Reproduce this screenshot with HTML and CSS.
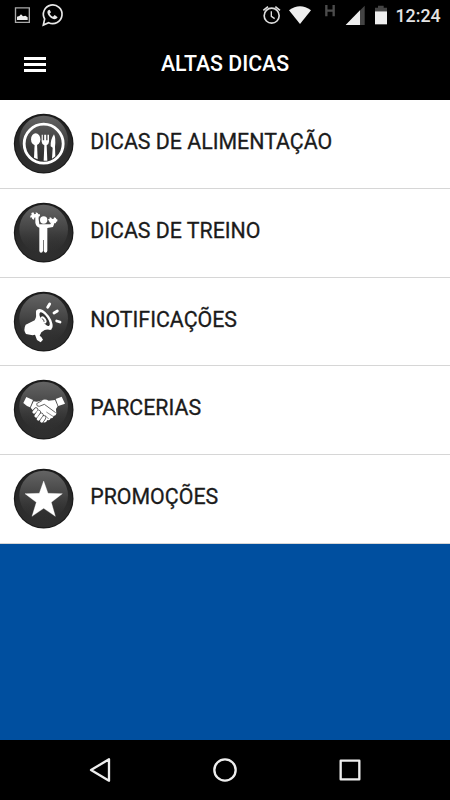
FILE: index.html
```html
<!DOCTYPE html>
<html lang="pt-BR">
<head>
<meta charset="utf-8">
<title>Altas Dicas</title>
<link rel="stylesheet" href="styles.css">
</head>
<body>
<svg class="defs" width="0" height="0" aria-hidden="true">
  <defs>
    <radialGradient id="disc" cx=".5" cy=".75" r=".75">
      <stop offset="0" stop-color="#303030"/><stop offset=".6" stop-color="#2c2c2c"/><stop offset="1" stop-color="#202020"/>
    </radialGradient>
    <linearGradient id="gloss" x1="0" y1="0" x2="0" y2="1">
      <stop offset="0" stop-color="#646464"/><stop offset=".5" stop-color="#444"/><stop offset="1" stop-color="#303030" stop-opacity="0"/>
    </linearGradient>
    <g id="badge">
      <circle cx="119" cy="119" r="89.5" fill="#191919"/>
      <circle cx="119" cy="119" r="86" fill="url(#disc)"/>
      <ellipse cx="119" cy="109" rx="73" ry="74" fill="url(#gloss)"/>
    </g>
  </defs>
</svg>
<div class="screen">
  <header class="status">
    <svg width="70" height="32" viewBox="0 0 210 96">
      <path d="M46.500 23.500H88V67H46.500Z" fill="none" stroke="#aaa" stroke-width="4"/>
      <path d="M51 60V50L58 48L63 43L69 49L76 47L83 52V60Z" fill="#eee"/>
      <path d="M130 75L134 57A28 28 0 1 1 146 68Z" fill="none" stroke="#e8e8e8" stroke-width="5"/>
      <path d="M145 31C140 35 142 43 150 51C158 59 168 60 173 52L164 45L159 50C154 48 151 44 149 41L153 37L149 29Z" fill="#e8e8e8"/>
    </svg>
    <div class="status-right">
      <svg width="140" height="32" viewBox="0 0 420 96">
        <g fill="none" stroke="#ddd" stroke-width="5"><circle cx="65" cy="47" r="22.5"/><path d="M40 31L54 20M76 20L90 31"/><path d="M64 34V49L74 56" stroke-width="4"/></g>
        <path d="M117 31Q150 6 183 31L150 72Z" fill="#eee"/>
        <path d="M229 15V49M251 15V49M228 32H251" stroke="#4c4c4c" stroke-width="7"/>
        <path d="M344 17V75H287Z" fill="#444"/><path d="M330 31V75H287Z" fill="#eee"/>
        <path d="M375 23H384V17H401V23H411V34H375Z" fill="#444"/><path d="M375 34H411V73H375Z" fill="#eee"/>
      </svg>
      <span class="clock">12:24</span>
    </div>
  </header>
  <div class="appbar">
    <div class="menu"><i></i><i></i><i></i></div>
    <h1>ALTAS DICAS</h1>
  </div>
  <main class="list">
    <div class="row">
      <svg viewBox="0 0 240 240"><use href="#badge"/>
        <circle cx="119" cy="119" r="58.5" fill="none" stroke="#fff" stroke-width="8.500"/>
        <g fill="#fff"><ellipse cx="95" cy="106" rx="14" ry="18"/><path d="M92 118H99L101 166L90 161Z"/>
        <path d="M113 92H116.500V109H120.500V92H126.500V109H130.500V92H135V113Q134 122 128 124L130 170H119L121 124Q114 122 113 113Z"/>
        <path d="M150 91Q156 103 153 128L154 157L144 164L146 131L140 127Q139 107 150 91Z"/></g>
      </svg><span>DICAS DE ALIMENTAÇÃO</span>
    </div>
    <div class="row">
      <svg viewBox="0 0 240 240"><use href="#badge"/>
        <g fill="#fff"><circle cx="119" cy="81" r="11"/>
        <path d="M94 72V89Q96 101 106 104V174Q107 179 111 179Q116 179 117 174V141H119V174Q121 179 125 179Q130 178 130 173V105L147 102L154 83H144L139 94H106L103 72Z"/>
        <path d="M79 68L83 66L82 60L88 58L91 64L96 62L95 58L101 60L103 64L107 63L108 69L104 71L103 76L98 77L95 73L91 74L90 80L85 78L83 73L79 74Z"/>
        <path d="M132 79L137 77V73L142 74L144 78L149 77L150 73L156 75L157 79L160 79V85L157 86L155 91L150 90L148 86L144 87L141 91L137 88L135 84Z"/></g>
      </svg><span>DICAS DE TREINO</span>
    </div>
    <div class="row">
      <svg viewBox="0 0 240 240"><use href="#badge"/>
        <path d="M96 84Q99 105 92 115L65 128Q57 143 66 156L86 160L93 158L99 174L110 181L117 173L112 165L107 161L112 151Q124 139 143 143Z" fill="#fff"/>
        <g transform="rotate(-35 121 112)"><ellipse cx="121" cy="112" rx="17" ry="36" fill="#fff"/><ellipse cx="122" cy="112" rx="9" ry="24" fill="#333"/><ellipse cx="118" cy="112" rx="7" ry="12" fill="#fff"/><path d="M116 106Q121 112 116 118" fill="none" stroke="#444" stroke-width="2.500"/></g>
        <g stroke="#fff" stroke-width="8.500" stroke-linecap="round"><path d="M131 76L137 66M150 93L160 87M158 117L168 120"/></g>
      </svg><span>NOTIFICAÇÕES</span>
    </div>
    <div class="row">
      <svg viewBox="0 0 240 240"><use href="#badge"/>
        <g fill="#fff"><path d="M58 99L67 81L87 90L78 112Q67 108 58 99Z"/><path d="M155 87L173 80L183 101L163 108Z"/>
        <path d="M89 94Q101 98 113 91Q124 86 134 92L153 90L161 109L156 117L157 131Q155 138 149 137Q147 146 140 145Q137 153 130 150Q126 160 118 157L106 150L94 130L80 113Z"/></g>
        <path d="M115 91L98 101Q97 110 106 109L121 103L155 128" fill="none" stroke="#444" stroke-width="2.500" stroke-linejoin="round"/>
        <path d="M127 126L147 139M123 136L134 147" fill="none" stroke="#555" stroke-width="2"/>
        <g stroke-linecap="round"><path d="M96 119L90 126M104 126L96 138M112 135L103 147M120 143L113 153" stroke="#3a3a3a" stroke-width="13.500"/><path d="M96 119L90 126M104 126L96 138M112 135L103 147M120 143L113 153" stroke="#fff" stroke-width="9.500"/></g>
      </svg><span>PARCERIAS</span>
    </div>
    <div class="row">
      <svg viewBox="0 0 240 240"><use href="#badge"/>
        <path d="M119 66L132 103L175 104L142 130L154 172L119 148L84 172L97 130L63 104L106 103Z" fill="#fff" stroke="#fff"/>
      </svg><span>PROMOÇÕES</span>
    </div>
  </main>
  <nav class="navbar">
    <svg width="300" height="60" viewBox="0 0 900 180" fill="none" stroke="#eee" stroke-width="7" stroke-linejoin="round">
      <path d="M87 58V122L33 90Z"/><circle cx="435" cy="90" r="32"/><path d="M782 62H838V118H782Z"/>
    </svg>
  </nav>
</div>
</body>
</html>
```
FILE: styles.css
```css
* { box-sizing: border-box; }
body { margin: 0; font-family: Roboto, sans-serif; }
.defs { display: block; height: 0; }
.screen { width: 450px; height: 800px; display: flex; flex-direction: column; background: #004f9f; overflow: hidden; }
.status { height: 32px; background: #000; display: flex; justify-content: space-between; }
.status svg { display: block; }
.status-right { display: flex; width: 200px; }
.clock { margin-left: 5.5px; color: #e4e4e4; font-size: 17.8px; font-weight: 500; line-height: 32px; }
.appbar { height: 68px; background: #000; display: grid; grid-template-columns: 70px 310px 70px; align-items: start; }
.menu { display: flex; flex-direction: column; gap: 3px; margin: 25px 0 0 24px; width: 22px; }
.menu i { height: 3px; background: #fff; }
h1 { margin: 0; color: #fff; text-align: center; font-size: 21.3px; font-weight: 500; line-height: 64px; }
.list { background: #fff; }
.row { height: 88.8px; display: flex; align-items: flex-start; padding: 4px 0 0 4px; border-bottom: 1.5px solid #d6d6d6; }
.row svg { width: 80px; height: 80px; flex: none; }
.row span { margin-left: 6.2px; color: #1b1b1b; font-size: 21.35px; line-height: 75px; white-space: nowrap; -webkit-text-stroke: .3px #1b1b1b; }
.navbar { margin-top: auto; height: 60px; background: #000; display: flex; justify-content: center; }
.navbar svg { margin-left: 10px; }
```
